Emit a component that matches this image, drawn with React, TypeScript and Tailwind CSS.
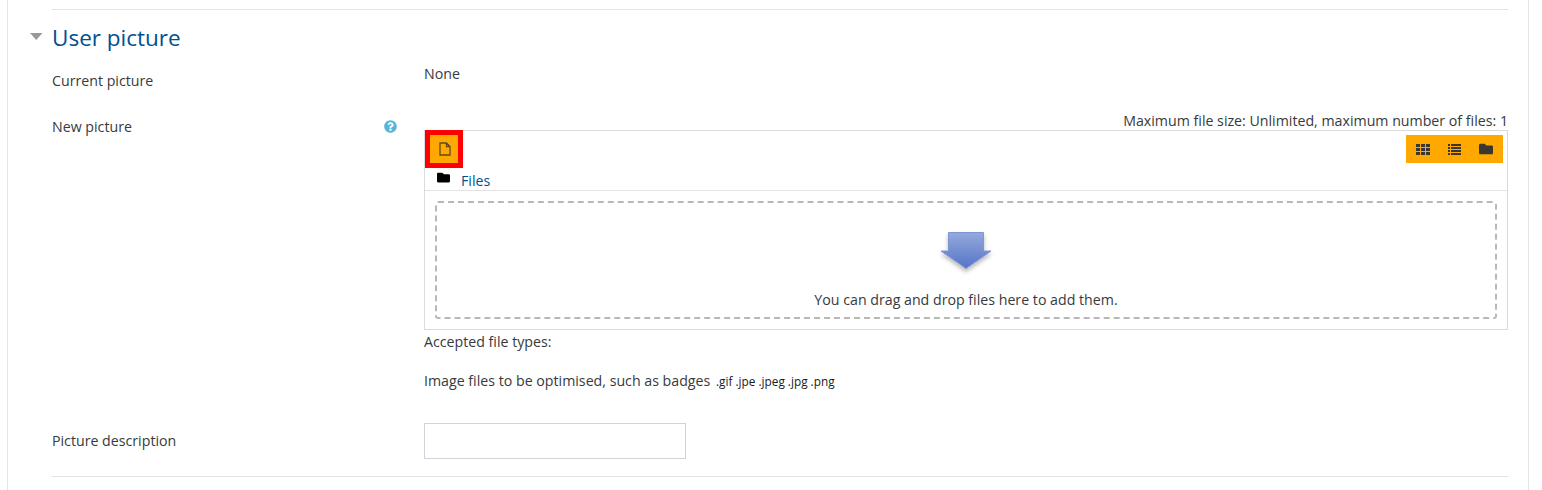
import { FaFolder, FaQuestionCircle } from "react-icons/fa";

function Arrow() {
  return (
    <svg width="60" height="48" viewBox="0 0 60 48" className="block">
      <defs>
        <linearGradient id="arrowFill" x1="0" y1="0" x2="0" y2="1">
          <stop offset="0" stopColor="#94a9dc" />
          <stop offset="1" stopColor="#5674c6" />
        </linearGradient>
        <filter id="arrowShadow" x="-20%" y="-20%" width="140%" height="150%">
          <feDropShadow dx="0" dy="3" stdDeviation="2.2" floodColor="#000" floodOpacity="0.28" />
        </filter>
      </defs>
      <path
        d="M12.5 2.5H47.5V21H55L30 38.5L5 21H12.5Z"
        fill="url(#arrowFill)"
        stroke="#7e96d6"
        strokeWidth="1"
        filter="url(#arrowShadow)"
      />
    </svg>
  );
}

function FileIcon() {
  return (
    <svg width="12" height="14" viewBox="0 0 12 14" className="ml-[1px] block">
      <path
        d="M1 1H7.5L11 4.5V13H1Z M7.5 1V4.5H11"
        fill="none"
        stroke="#5f4a1c"
        strokeWidth="1.3"
      />
    </svg>
  );
}

function GridIcon() {
  return (
    <svg width="14" height="11" viewBox="0 0 14 11" className="block" fill="#3a3630">
      <path d="M0 0H4V3H0Z M5 0H9V3H5Z M10 0H14V3H10Z M0 4H4V7H0Z M5 4H9V7H5Z M10 4H14V7H10Z M0 8H4V11H0Z M5 8H9V11H5Z M10 8H14V11H10Z" />
    </svg>
  );
}

function ListIcon() {
  return (
    <svg width="13" height="11" viewBox="0 0 13 11" className="block" fill="#3a3630">
      <path d="M0 0H2V2H0Z M3 0H13V2H3Z M0 3H2V5H0Z M3 3H13V5H3Z M0 6H2V8H0Z M3 6H13V8H3Z M0 9H2V11H0Z M3 9H13V11H3Z" />
    </svg>
  );
}

export default function App() {
  return (
    <div className="h-[490px] w-full overflow-hidden bg-white font-['Open_Sans',sans-serif] text-[14.2px] text-[#373a3c]">
      <div className="ml-[7px] h-[490px] w-[1522px] border-x border-[#e5e5e5] pl-[22px] pr-[20px] pt-[9px]">
        <div className="ml-[22px] h-px bg-[#e3e3e3]" />

        <div className="flex h-[52px] items-start pt-[14px]">
          <svg width="22" height="7" viewBox="0 0 22 7" className="mt-[9px] block shrink-0">
            <path d="M0 0H12.5L6.25 7Z" fill="#999999" />
          </svg>
          <h3 className="text-[22.5px] leading-[28px] text-[#00508f]">User picture</h3>
        </div>

        <div className="flex h-[46px] pl-[22px]">
          <div className="w-[372px] pt-[8px] leading-[22px]">Current picture</div>
          <div className="flex-1 pt-px leading-[22px]">None</div>
        </div>

        <div className="flex pl-[22px]">
          <div className="flex h-[30px] w-[372px] items-start justify-between pt-[8px]">
            <span className="leading-[22px]">New picture</span>
            <FaQuestionCircle className="mr-[27px] mt-[4px] text-[13px] text-[#58b7d9]" />
          </div>
          <div className="flex-1">
            <div className="h-[22px] pt-[3px] text-right leading-[20px]">
              Maximum file size: Unlimited, maximum number of files: 1
            </div>

            <div className="h-[200px] border border-[#d8dbe0]">
              <div className="flex h-[38px] items-start justify-between">
                <button className="-mt-px flex h-[38px] w-[38px] items-center justify-center border-[5px] border-[#ff0000] bg-[#ffa800]">
                  <FileIcon />
                </button>
                <div className="mr-[4px] mt-[4px] flex h-[28px] w-[97px] items-center justify-between bg-[#ffa800] pl-[10px] pr-[10px] text-[#3a3630]">
                  <GridIcon />
                  <ListIcon />
                  <FaFolder className="text-[14px]" />
                </div>
              </div>
              <div className="flex h-[22px] border-b border-[#e3e3e3] pl-[12px]">
                <FaFolder className="mt-[2px] text-[13px] text-black" />
                <a className="ml-[11px] mt-[2px] leading-[20px] text-[#00508f]">Files</a>
              </div>
              <div className="px-[10px] pt-[10px]">
                <div className="flex h-[118px] flex-col items-center rounded-[3px] border-2 border-dashed border-[#b8b8b8] pt-[27px]">
                  <Arrow />
                  <div className="mt-[11px] leading-[22px]">You can drag and drop files here to add them.</div>
                </div>
              </div>
            </div>

            <div className="h-[40px] pt-px leading-[22px]">Accepted file types:</div>
            <div className="h-[53px] leading-[22px]">
              Image files to be optimised, such as badges{" "}
              <span className="ml-[2px] text-[11.8px] text-[#1a1a1a]">.gif .jpe .jpeg .jpg .png</span>
            </div>
          </div>
        </div>

        <div className="flex pl-[22px]">
          <div className="w-[372px] pt-[7px] leading-[22px]">Picture description</div>
          <input className="block h-[36px] w-[262px] border border-[#ced4da] bg-white" />
        </div>

        <div className="ml-[22px] mt-[17px] h-px bg-[#e3e3e3]" />
      </div>
    </div>
  );
}
